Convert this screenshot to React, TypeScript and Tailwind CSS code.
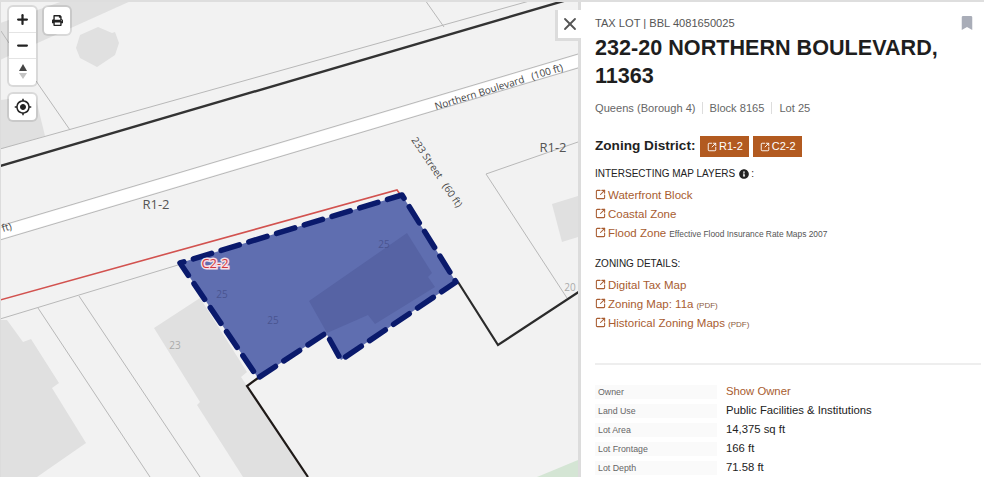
import React from "react";
import { Plus, Minus, X, SquareArrowOutUpRight } from "lucide-react";
import { FaPrint, FaBookmark, FaInfoCircle } from "react-icons/fa";
import { MdGpsFixed } from "react-icons/md";

const MapDrawing = () => (
  <svg viewBox="0 0 577 475" width="577" height="475" className="block" style={{ fontFamily: '"Open Sans", sans-serif' }}>
    <g transform="translate(-1 -2)">
      <rect x="0" y="0" width="580" height="477" fill="#f2f2f2" />
      <polygon points="0,23 66,0 133,0 0,60" fill="#e0e0e0" />
      <polygon points="98,27 112,33 115,32 119,43 115,55 97,67 80,58 76,48 80,35" fill="#e0e0e0" />
      <polygon points="1,100 35,95 45,136 1,149" fill="#e0e0e0" />
      <polygon points="0,320 7,320 23,342 31,339 59,383 52,388 86,443 37,477 0,477" fill="#e0e0e0" />
      <polygon points="154,328 200,298 247,372 241,377 247,386 308,477 243,477 197,405 200,402" fill="#e0e0e0" />
      <polygon points="552,204 578,196 578,237 562,242" fill="#e0e0e0" />
      <polygon points="537,477 578,460 578,477" fill="#d4e5d4" />
      <polygon points="0,227 578,55 578,67 0,239" fill="#ffffff" />
      <g stroke="#b8b8b8" strokeWidth="1" fill="none">
        <line x1="0" y1="149" x2="533" y2="0" />
        <polyline points="36,81 70,130" />
        <line x1="1" y1="31" x2="9" y2="43" />
        <line x1="425" y1="0" x2="444" y2="27" />
        <line x1="0" y1="226" x2="578" y2="54" />
        <line x1="0" y1="240" x2="578" y2="68" />
        <line x1="0" y1="319" x2="178" y2="265" />
        <line x1="38" y1="308" x2="150" y2="477" />
        <line x1="79" y1="296" x2="200" y2="477" />
        <polyline points="578,142 486,174 567,298" />
      </g>
      <line x1="0" y1="166" x2="567" y2="0" stroke="#333333" strokeWidth="2.4" />
      <polyline points="0,300 397,190 402,197" fill="none" stroke="#d2524f" strokeWidth="1.6" />
      <polyline points="458,282 498,345 580,291" fill="none" stroke="#2b2b2b" strokeWidth="2.2" />
      <polyline points="258,378 247,386 308,477" fill="none" stroke="#1f1a18" strokeWidth="2.2" />
      <polygon points="180,263 402,195 456,282 341,360 326,333 258,378" fill="#5f6eb0" />
      <polygon points="407,233 432,273 428,277 435,287 375,324 368,315 327,333 309,301" fill="#5663a4" />
      <polygon
        points="180,263 402,195 456,282 341,360 326,333 258,378"
        fill="none"
        stroke="#0a1a6c"
        strokeWidth="5.5"
        strokeDasharray="19 10"
        strokeDashoffset="15"
        strokeLinecap="round"
        strokeLinejoin="round"
      />
      <g fontSize="10" fill="#4a5590" textAnchor="middle">
        <text x="222" y="298">25</text>
        <text x="273" y="324">25</text>
        <text x="384" y="248">25</text>
      </g>
      <g fontSize="10" fill="#aaaaaa" textAnchor="middle">
        <text x="175" y="349">23</text>
        <text x="570" y="291">20</text>
      </g>
      <text x="215" y="268" fontSize="13" textAnchor="middle" fill="#d2383f" stroke="#f6dfe6" strokeWidth="3" paintOrder="stroke">C2-2</text>
      <g fontSize="13" fill="#555555" textAnchor="middle">
        <text x="156" y="209">R1-2</text>
        <text x="553" y="152">R1-2</text>
      </g>
      <g fontSize="10" fill="#444444">
        <text transform="translate(436 110) rotate(-17.3)" style={{ whiteSpace: "pre" }}>Northern Boulevard   (100 ft)</text>
        <text transform="translate(411 140) rotate(56)" style={{ whiteSpace: "pre" }}>233 Street   (60 ft)</text>
        <text transform="translate(3 232) rotate(-17.3)">ft)</text>
      </g>
    </g>
  </svg>
);

const ctrl = "w-[27px] h-[26px] flex items-center justify-center text-[#222]";

const MapControls = () => (
  <>
    <div className="absolute left-[6px] top-[3px] w-[31px] bg-white rounded-md border-2 border-black/10 bg-clip-padding flex flex-col">
      <div className={`${ctrl} border-b border-[#e4e4e4]`}><Plus size={15} strokeWidth={3.6} /></div>
      <div className={`${ctrl} border-b border-[#e4e4e4]`}><Minus size={15} strokeWidth={3.6} /></div>
      <div className={`${ctrl} flex-col`}>
        <svg width="10" height="16" viewBox="0 0 10 16">
          <polygon points="5,0 9,7 1,7" fill="#444444" />
          <polygon points="1,9 9,9 5,15" fill="#c4c4c4" />
        </svg>
      </div>
    </div>
    <div className="absolute left-[41px] top-[3px] w-[30px] h-[31px] bg-white rounded-md border-2 border-black/10 bg-clip-padding flex items-center justify-center">
      <FaPrint size={11} color="#222" />
    </div>
    <div className="absolute left-[6px] top-[90px] w-[31px] h-[30px] bg-white rounded-md border-2 border-black/10 bg-clip-padding flex items-center justify-center">
      <MdGpsFixed size={18} color="#222" />
    </div>
    <div className="absolute left-[554px] top-[8px] w-[26px] h-[31px] bg-white border-l-[3px] border-b-[3px] border-[#dcdcdc] flex items-center justify-center">
      <X size={20} strokeWidth={2.2} color="#555" />
    </div>
  </>
);

const LinkIcon = () => <SquareArrowOutUpRight size={11} strokeWidth={2.3} className="inline-block mr-[2px] relative top-[-1px]" />;

const MapLink = ({ label, note, small }: { label: string; note?: string; small?: string }) => (
  <div className="h-[19px] leading-[19px] text-[11.5px] text-[#a85c30] whitespace-nowrap">
    <LinkIcon />
    {label}
    {note && <span className="text-[8.4px] text-[#555] ml-[3px]">{note}</span>}
    {small && <span className="text-[8px] text-[#8a5a40] ml-[3px]">{small}</span>}
  </div>
);

const Row = ({ label, children }: { label: string; children: React.ReactNode }) => (
  <div className="flex items-center h-[19px]">
    <div className="w-[122px] h-[14px] leading-[14px] bg-[#fafafa] pl-[3px] text-[8.8px] text-[#666] shrink-0">{label}</div>
    <div className="ml-[9px] text-[11.3px] text-[#222] whitespace-nowrap">{children}</div>
  </div>
);

const Badge = ({ label }: { label: string }) => (
  <span className="h-[21px] px-[6.5px] bg-[#b25a20] text-white text-[11px] font-normal flex items-center whitespace-nowrap">
    <SquareArrowOutUpRight size={10} strokeWidth={2.2} className="mr-[2px]" />
    {label}
  </span>
);

const Sidebar = () => (
  <div className="relative w-[403px] shrink-0 bg-white pl-[14px] pr-[3px] pt-[13px] overflow-hidden">
    <FaBookmark size={14} color="#a9adb8" className="absolute right-[10px] top-[14px]" />
    <div className="text-[11.1px] leading-[16px] text-[#555]">TAX LOT | BBL 4081650025</div>
    <h1 className="mt-[3px] text-[21.6px] leading-[28px] font-bold text-[#1e1e1e] pr-[30px]">232-20 NORTHERN BOULEVARD, 11363</h1>
    <div className="mt-[10px] flex items-center text-[11.1px] leading-[16px] text-[#666]">
      <span>Queens (Borough 4)</span>
      <span className="mx-[6.5px] w-px h-[12px] bg-[#ddd]" />
      <span>Block 8165</span>
      <span className="mx-[7px] w-px h-[12px] bg-[#ddd]" />
      <span>Lot 25</span>
    </div>
    <div className="mt-[20px] flex items-center h-[21px] text-[13.6px] font-bold text-[#222]">
      <span className="mr-[5px]">Zoning District:</span>
      <span className="flex gap-[4px]">
        <Badge label="R1-2" />
        <Badge label="C2-2" />
      </span>
    </div>
    <div className="mt-[9px] h-[16px] leading-[16px] flex items-center text-[10px] text-[#222]">
      INTERSECTING MAP LAYERS
      <FaInfoCircle size={10} color="#222" className="ml-[4px] mr-[2px]" />:
    </div>
    <div className="mt-[4px] flex flex-col">
      <MapLink label="Waterfront Block" />
      <MapLink label="Coastal Zone" />
      <MapLink label="Flood Zone" note="Effective Flood Insurance Rate Maps 2007" />
    </div>
    <div className="mt-[13px] h-[16px] leading-[16px] text-[10px] text-[#222]">ZONING DETAILS:</div>
    <div className="mt-[4px] flex flex-col">
      <MapLink label="Digital Tax Map" />
      <MapLink label="Zoning Map: 11a" small="(PDF)" />
      <MapLink label="Historical Zoning Maps" small="(PDF)" />
    </div>
    <div className="mt-[30px] h-[2px] bg-[#eeeeee]" />
    <div className="mt-[17px] flex flex-col">
      <Row label="Owner"><span className="text-[#a85c30]">Show Owner</span></Row>
      <Row label="Land Use">Public Facilities &amp; Institutions</Row>
      <Row label="Lot Area">14,375 sq ft</Row>
      <Row label="Lot Frontage">166 ft</Row>
      <Row label="Lot Depth">71.58 ft</Row>
    </div>
  </div>
);

export default function App() {
  return (
    <div className="w-[984px] h-[477px] overflow-hidden border-t-2 border-[#dedede] flex bg-white" style={{ fontFamily: '"Liberation Sans", Arial, sans-serif' }}>
      <div className="relative w-[581px] shrink-0 border-l border-[#dcdcdc] border-r-[3px]">
        <MapDrawing />
        <MapControls />
      </div>
      <Sidebar />
    </div>
  );
}
